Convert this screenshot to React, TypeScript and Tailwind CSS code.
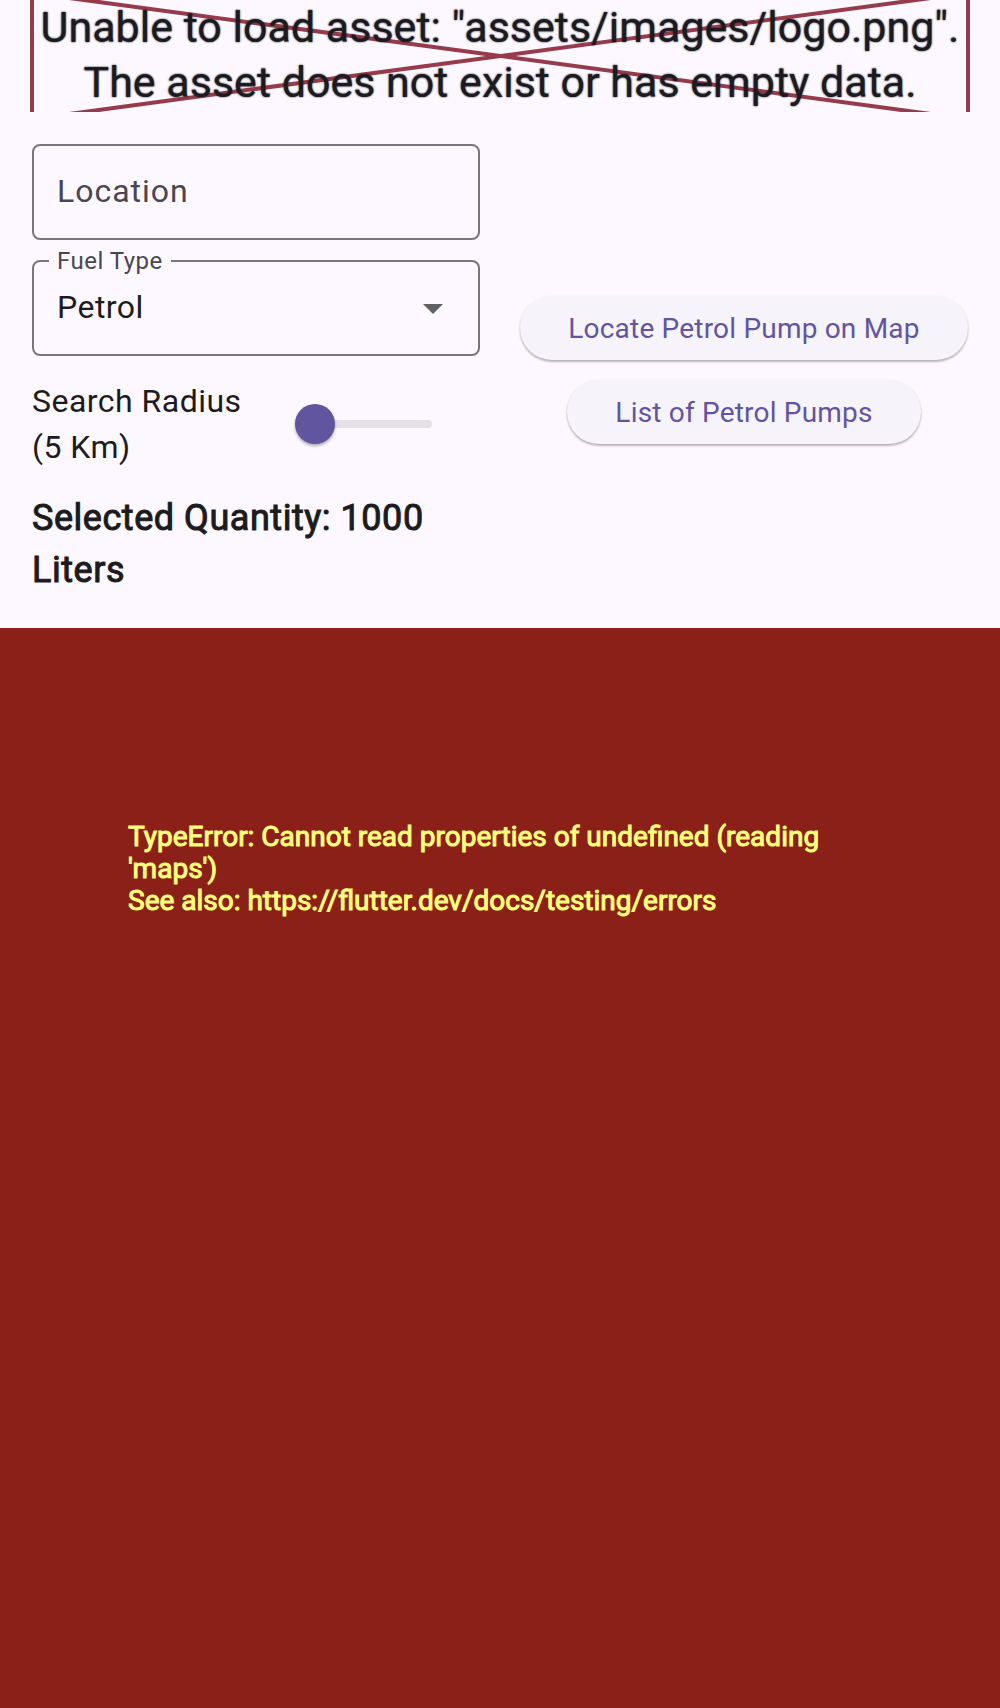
import { useState } from "react";

function MissingAsset() {
  return (
    <div className="relative mx-[30px] overflow-hidden border-x-4 border-[#963b4c]">
      <svg className="absolute inset-0 h-full w-full" aria-hidden="true">
        <g stroke="#963b4c" strokeWidth="4">
          <line x1="0" y1="-6%" x2="100%" y2="106%" />
          <line x1="0" y1="106%" x2="100%" y2="-6%" />
        </g>
      </svg>
      <p className="relative pb-[2px] text-center text-[43px] leading-[55px] text-[#1c1b20] [text-shadow:0_0_2px_#1c1b20]">
        Unable to load asset: "assets/images/logo.png".
        <br />
        The asset does not exist or has empty data.
      </p>
    </div>
  );
}

const fieldBox =
  "h-24 w-full appearance-none rounded-lg border-2 border-[#78757f] bg-transparent px-[23px] pb-[2px] text-[32px] text-[#1c1b20] outline-none";

const pill =
  "h-16 rounded-full bg-[#f6f3fa] px-12 pt-[2px] text-[28px] tracking-[0.007em] whitespace-nowrap text-[#62559f] shadow-[0_2px_2px_rgba(0,0,0,0.22),0_1px_3px_rgba(0,0,0,0.1)]";

export default function App() {
  const [location, setLocation] = useState("");
  const [fuel, setFuel] = useState("Petrol");
  const [radius, setRadius] = useState(5);

  return (
    <div className="flex min-h-screen flex-col bg-[#fdf8ff] font-['Roboto',sans-serif] text-[#1c1b20]">
      <MissingAsset />

      <main className="grid grid-cols-2 gap-10 p-8">
        <div className="flex flex-col gap-5">
          <input
            type="text"
            aria-label="Location"
            placeholder="Location"
            value={location}
            onChange={(e) => setLocation(e.target.value)}
            className={`${fieldBox} tracking-[0.031em] placeholder:text-[#48464f] placeholder:opacity-100`}
          />

          <div className="relative">
            <label
              htmlFor="fuel"
              className="absolute -top-[11px] left-[17px] bg-[#fdf8ff] px-2 text-[24px] leading-6 tracking-[0.02em] text-[#48464f]"
            >
              Fuel Type
            </label>
            <select
              id="fuel"
              value={fuel}
              onChange={(e) => setFuel(e.target.value)}
              className={`${fieldBox} tracking-[0.015em]`}
            >
              <option>Petrol</option>
              <option>Diesel</option>
            </select>
            <svg
              viewBox="0 0 20 10"
              className="pointer-events-none absolute top-11 right-[37px] h-[10px] w-5 fill-[#616161]"
              aria-hidden="true"
            >
              <path d="M0 0h20L10 10z" />
            </svg>
          </div>

          <div className="grid h-24 grid-cols-2 items-center">
            <label htmlFor="radius" className="text-[32px] leading-[46px] tracking-[0.015em]">
              Search Radius ({radius} Km)
            </label>
            <input
              id="radius"
              type="range"
              min={5}
              max={50}
              value={radius}
              onChange={(e) => setRadius(Number(e.target.value))}
              className="mr-12 ml-[39px] h-10 min-w-0 cursor-pointer appearance-none bg-transparent [&::-webkit-slider-runnable-track]:h-2 [&::-webkit-slider-runnable-track]:rounded-full [&::-webkit-slider-runnable-track]:bg-[#e4e1e8] [&::-webkit-slider-thumb]:-mt-4 [&::-webkit-slider-thumb]:size-10 [&::-webkit-slider-thumb]:appearance-none [&::-webkit-slider-thumb]:rounded-full [&::-webkit-slider-thumb]:bg-[#62559f] [&::-webkit-slider-thumb]:shadow-[0_2px_3px_rgba(0,0,0,0.3)]"
            />
          </div>

          <p className="text-[36px] leading-[52px] tracking-[0.015em] [-webkit-text-stroke:1px_#1c1b20]">
            Selected Quantity: 1000 Liters
          </p>
        </div>

        <div className="flex flex-col items-center justify-center gap-5">
          <button type="button" className={pill}>
            Locate Petrol Pump on Map
          </button>
          <button type="button" className={pill}>
            List of Petrol Pumps
          </button>
        </div>
      </main>

      <section
        role="alert"
        className="flex-1 bg-[#8b2018] px-32 pt-[193px] text-[28px] leading-8 text-[#ffff7c] [-webkit-text-stroke:1px_#ffff7c]"
      >
        <p>TypeError: Cannot read properties of undefined (reading 'maps')</p>
        <p>See also: https://flutter.dev/docs/testing/errors</p>
      </section>
    </div>
  );
}
